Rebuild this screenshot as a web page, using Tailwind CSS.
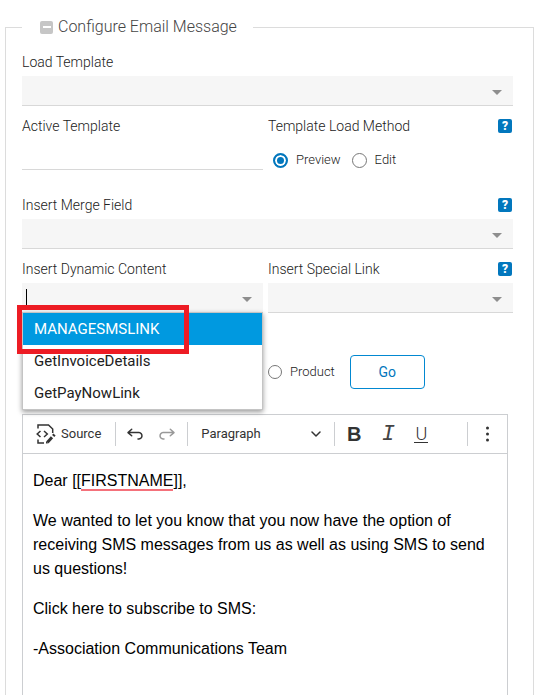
<!DOCTYPE html>
<html lang="en">

<head>
    <title>Configure Email Message</title>

    <meta charset="UTF-8" />
    <meta name="viewport" content="width=device-width, initial-scale=1.0" />
    <script src="https://cdn.jsdelivr.net/npm/@tailwindcss/browser@4"></script>
</head>

<body class="bg-white font-['Roboto',sans-serif] text-[#212121]">
    <main class="flex min-h-screen flex-col pt-[15px] pr-[6px] pl-[5px]">
        <fieldset class="flex flex-1 flex-col border border-b-0 border-[#dcdcdc] pr-5 pl-4">
            <legend class="flex h-6 items-center gap-[5px] pr-4 pl-[18px] text-base font-light text-[#444]">
                <button type="button" aria-label="Collapse section" class="flex size-[13px] items-center justify-center rounded-xs bg-[#c6c6c6]">
                    <span class="h-[2px] w-2 bg-white"></span>
                </button>
                Configure Email Message
            </legend>

            <!-- Load template -->
            <div class="mt-[9px]">
                <label for="load-template" class="flex h-7 items-center text-sm font-light">Load Template</label>
                <div class="relative">
                    <select id="load-template" class="block h-[30px] w-full appearance-none border-b border-[#d8d8d8] bg-[#f6f6f6] px-3 text-sm">
                        <option></option>
                    </select>
                    <span class="pointer-events-none absolute top-[14px] right-[11px] border-x-5 border-t-5 border-x-transparent border-t-[#8e8e8e]"></span>
                </div>
            </div>

            <!-- Active template / load method -->
            <div class="mt-[6px] grid grid-cols-[241fr_245fr] gap-[5px]">
                <div>
                    <label for="active-template" class="flex h-7 items-center text-sm font-light">Active Template</label>
                    <input type="text" id="active-template" class="block h-[30px] w-full border-b border-[#d8d8d8] text-sm outline-none" />
                </div>
                <div role="radiogroup" aria-labelledby="load-method">
                    <div class="flex h-7 items-center justify-between pr-px text-sm font-light">
                        <span id="load-method">Template Load Method</span>
                        <button type="button" aria-label="Help" class="flex size-[14px] items-center justify-center rounded-xs bg-[#0277bd] text-xs font-black text-white">?</button>
                    </div>
                    <div class="flex h-10 items-center pl-[5px] text-[13px] font-light">
                        <input type="radio" id="preview" name="method" checked class="size-[15px] appearance-none rounded-full border-2 border-[#8a8a8a] bg-white checked:border-[#0277bd] checked:bg-[#0277bd] checked:shadow-[inset_0_0_0_2px_white]" />
                        <label for="preview" class="pl-2">Preview</label>
                        <input type="radio" id="edit" name="method" class="ml-[11px] size-[15px] appearance-none rounded-full border border-[#777] bg-white" />
                        <label for="edit" class="pl-2">Edit</label>
                    </div>
                </div>
            </div>

            <!-- Merge field -->
            <div class="mt-[11px]">
                <div class="flex h-7 items-center justify-between pr-px text-sm font-light">
                    <label for="merge-field">Insert Merge Field</label>
                    <button type="button" aria-label="Help" class="flex size-[14px] items-center justify-center rounded-xs bg-[#0277bd] text-xs font-black text-white">?</button>
                </div>
                <div class="relative">
                    <select id="merge-field" class="block h-[30px] w-full appearance-none border-b border-[#d8d8d8] bg-[#f6f6f6] px-3 text-sm">
                        <option></option>
                    </select>
                    <span class="pointer-events-none absolute top-[14px] right-[11px] border-x-5 border-t-5 border-x-transparent border-t-[#8e8e8e]"></span>
                </div>
            </div>

            <!-- Dynamic content / special link -->
            <div class="mt-[6px] grid grid-cols-[241fr_245fr] gap-[5px]">
                <div>
                    <label for="dynamic-content" class="flex h-7 items-center text-sm font-light">Insert Dynamic Content</label>
                    <div class="relative">
                        <input type="text" id="dynamic-content" role="combobox" aria-expanded="true" aria-controls="dynamic-list" class="block h-[30px] w-full border-b border-[#d8d8d8] bg-[#f6f6f6] px-1 text-sm outline-none" />
                        <span class="pointer-events-none absolute top-[6px] left-1 h-[17px] w-px bg-black"></span>
                        <span class="pointer-events-none absolute top-[14px] right-[11px] border-x-5 border-t-5 border-x-transparent border-t-[#8e8e8e]"></span>
                        <ul id="dynamic-list" role="listbox" class="absolute inset-x-0 top-[29px] z-10 border border-[#c4c4c4] bg-white text-[15px] shadow-[0_2px_5px_rgba(0,0,0,0.4)]">
                            <li role="option" aria-selected="true" class="flex h-8 items-center bg-[#0099e0] px-[11px] text-white">MANAGESMSLINK</li>
                            <li role="option" class="flex h-8 items-center px-[11px]">GetInvoiceDetails</li>
                            <li role="option" class="flex h-8 items-center px-[11px]">GetPayNowLink</li>
                        </ul>
                        <div class="pointer-events-none absolute top-[22px] -left-[5px] z-20 h-[49px] w-[172px] border-5 border-[#ed1c24]"></div>
                    </div>
                </div>
                <div>
                    <div class="flex h-7 items-center justify-between pr-px text-sm font-light">
                        <label for="special-link">Insert Special Link</label>
                        <button type="button" aria-label="Help" class="flex size-[14px] items-center justify-center rounded-xs bg-[#0277bd] text-xs font-black text-white">?</button>
                    </div>
                    <div class="relative">
                        <select id="special-link" class="block h-[30px] w-full appearance-none border-b border-[#d8d8d8] bg-[#f6f6f6] px-3 text-sm">
                            <option></option>
                        </select>
                        <span class="pointer-events-none absolute top-[14px] right-[11px] border-x-5 border-t-5 border-x-transparent border-t-[#8e8e8e]"></span>
                    </div>
                    <div class="mt-[42px] flex h-[34px] items-center text-[13px] font-light">
                        <input type="radio" id="product" name="source" class="size-[14px] appearance-none rounded-full border border-[#777] bg-white" />
                        <label for="product" class="pl-2">Product</label>
                        <button type="button" class="ml-[15px] h-[34px] w-[75px] rounded-sm border border-[#0288d1] text-sm font-normal text-[#0277bd]">Go</button>
                    </div>
                </div>
            </div>

            <!-- Message editor -->
            <div class="mt-[25px] mr-[5px] border border-b-0 border-[#ccced1]">
                <div role="toolbar" aria-label="Editor toolbar" class="flex h-[39px] items-center border-b border-[#ccced1] text-[13px] text-[#333]">
                    <button type="button" class="flex items-center gap-[5px] pl-[13px]">
                        <svg class="size-5" viewBox="0 0 20 20" fill="none" stroke="currentColor" stroke-width="1.5">
                            <path d="M2 4.500V1h10.500l4.200 4v4" />
                            <path d="M2 15.500V19h6" />
                            <path d="M4.500 7 1.200 10l3.300 3M8 7l3.300 3L8 13" />
                            <path d="m11.500 18.200 4.500-5" stroke-width="3" />
                            <path d="M10 19.500v-2.500l2.500 2.300z" fill="currentColor" stroke="none" />
                            <path d="m17.200 12 1.300-1.400" stroke-width="3" />
                        </svg>
                        Source
                    </button>
                    <span class="ml-[14px] h-6 w-px bg-[#ccced1]"></span>
                    <button type="button" aria-label="Undo" class="ml-[9px]">
                        <svg class="size-5" viewBox="0 0 20 20" fill="none" stroke="currentColor" stroke-width="1.500" stroke-linecap="round" stroke-linejoin="round">
                            <path d="M6.700 5.300 3 8.600l3.700 3.200M3.200 8.600H14a3.200 3.200 0 1 1-1 6.300" />
                        </svg>
                    </button>
                    <button type="button" aria-label="Redo" disabled class="ml-3 text-[#999]">
                        <svg class="size-5" viewBox="0 0 20 20" fill="none" stroke="currentColor" stroke-width="1.500" stroke-linecap="round" stroke-linejoin="round">
                            <path d="M13.300 5.300 17 8.600l-3.700 3.200M16.800 8.600H6a3.200 3.200 0 1 0 1 6.300" />
                        </svg>
                    </button>
                    <span class="ml-[10px] h-6 w-px bg-[#ccced1]"></span>
                    <button type="button" class="flex w-[133px] items-center justify-between pl-[13px]">
                        Paragraph
                        <svg class="w-[10px]" viewBox="0 0 10 6" fill="none" stroke="currentColor" stroke-width="1.500" stroke-linecap="round" stroke-linejoin="round">
                            <path d="m1 1 4 4 4-4" />
                        </svg>
                    </button>
                    <span class="ml-[13px] h-6 w-px bg-[#ccced1]"></span>
                    <button type="button" aria-label="Bold" class="ml-[9px] w-5 font-['Liberation_Sans',sans-serif] text-xl font-bold">B</button>
                    <button type="button" aria-label="Italic" class="ml-[14px] w-5 font-['Liberation_Mono',monospace] text-[22px] text-[#444] italic">I</button>
                    <button type="button" aria-label="Underline" class="ml-4 flex w-[14px] justify-center border-b border-[#333] text-lg leading-4 font-light">U</button>
                    <span class="mr-[18px] ml-auto h-6 w-px bg-[#ccced1]"></span>
                    <button type="button" aria-label="Show more items" class="mr-[18px]">
                        <svg class="h-4 w-[3px]" viewBox="0 0 3 16" fill="currentColor">
                            <circle cx="1.500" cy="2" r="1.500" />
                            <circle cx="1.500" cy="8" r="1.500" />
                            <circle cx="1.500" cy="14" r="1.500" />
                        </svg>
                    </button>
                </div>
                <div class="min-h-[241px] space-y-4 px-[10px] py-[15px] font-['Liberation_Sans',sans-serif] text-base text-black">
                    <p>Dear [[<span class="border-b-2 border-[#f4717b]">FIRSTNAME</span>]],</p>
                    <p>We wanted to let you know that you now have the option of receiving SMS messages from us as well as using SMS to send us questions!</p>
                    <p>Click here to subscribe to SMS:</p>
                    <p>-Association Communications Team</p>
                </div>
            </div>
        </fieldset>
    </main>
</body>

</html>
